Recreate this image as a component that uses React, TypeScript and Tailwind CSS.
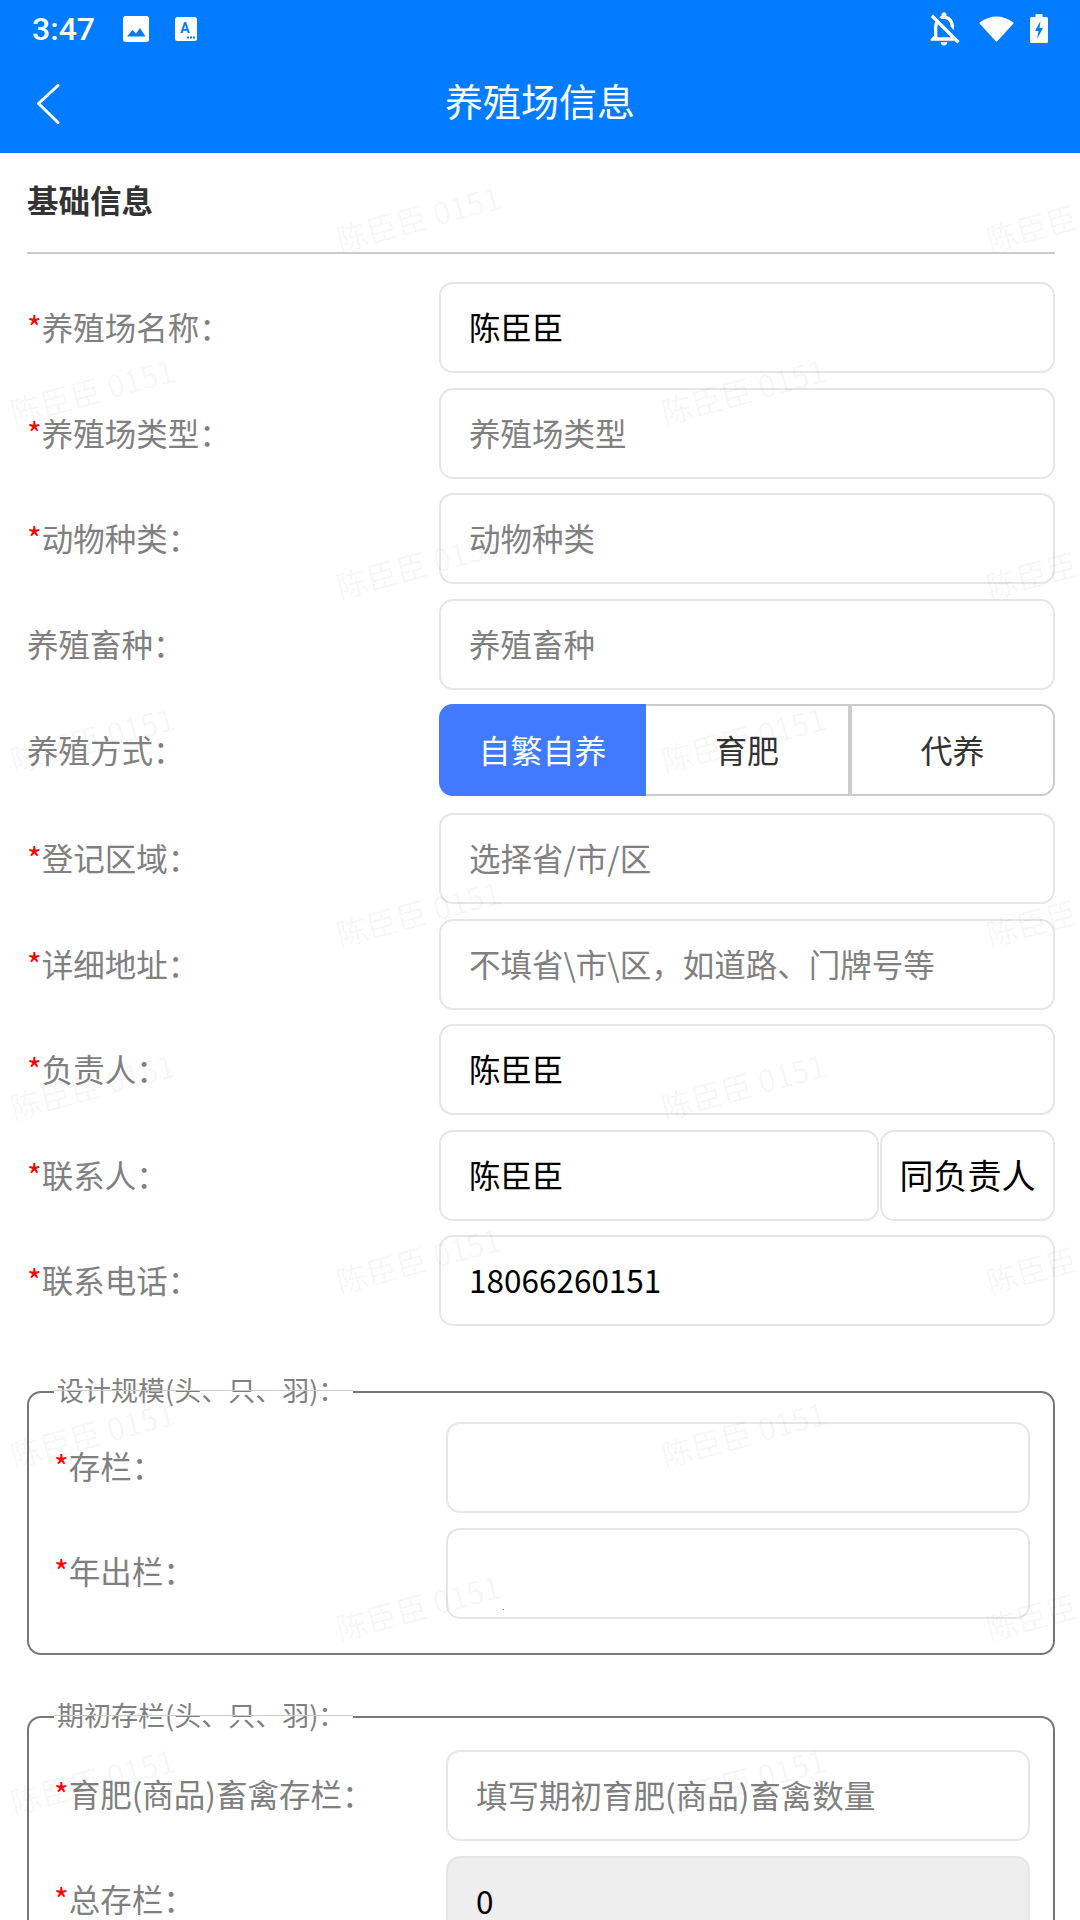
const FONT = "[font-family:'Noto_Sans_CJK_SC','Noto_Sans',sans-serif]";

// watermark centres, read off the screenshot
const MARKS: { x: number; y: number; top?: boolean }[] = [];
for (let i = 0; i < 11; i++) {
  const y = 43 + i * 173.7;
  if (i % 2 === 0) {
    MARKS.push({ x: 92, y, top: i === 0 }, { x: 743, y, top: i === 0 });
  } else {
    MARKS.push({ x: 418, y }, { x: 1068, y });
  }
}

function Label({ text, required }: { text: string; required?: boolean }) {
  return (
    <div className="-mt-[3px] text-[31.5px] leading-[44px] whitespace-nowrap text-[#808080]">
      {required && <span className="text-[#f00]">*</span>}
      {text}：
    </div>
  );
}

function TextBox({ value, placeholder, extra = '' }: { value?: string; placeholder?: string; extra?: string }) {
  return (
    <input
      readOnly
      value={value ?? ''}
      placeholder={placeholder}
      className={`block h-[91px] min-w-0 rounded-[14px] border-2 border-[#e6e6e6] pb-[3px] pl-[28px] text-[31.5px] text-black outline-none placeholder:text-[#808080] ${extra}`}
    />
  );
}

function Field({ label, required, value, placeholder }: { label: string; required?: boolean; value?: string; placeholder?: string }) {
  return (
    <div className="mb-[14.5px] flex items-center">
      <div className="w-[412px]">
        <Label text={label} required={required} />
      </div>
      <TextBox value={value} placeholder={placeholder} extra="flex-1" />
    </div>
  );
}

function GroupField({ label, value, placeholder, grey }: { label: string; value?: string; placeholder?: string; grey?: boolean }) {
  return (
    <div className="mb-[14.5px] flex items-center">
      <div className="w-[392px] pb-[3px]">
        <Label text={label} required />
      </div>
      <TextBox value={value} placeholder={placeholder} extra={grey ? 'flex-1 bg-[#eeeeee]' : 'flex-1'} />
    </div>
  );
}

function Group({ title, className, children }: { title: string; className: string; children: React.ReactNode }) {
  return (
    <fieldset className={`rounded-[14px] border-[2.5px] border-[#777777] pl-[25px] pr-[23px] pb-[20px] ${className}`}>
      <legend className="relative pb-[4px] pl-[3px] pr-[8px] text-[27px] leading-[36px] text-[#808080]">
        {title}
        <span className="absolute inset-x-0 top-1/2 -mt-[2px] h-px bg-[#cccccc]" />
      </legend>
      {children}
    </fieldset>
  );
}

function StatusBar() {
  return (
    <div className="flex h-[56px] items-center pl-[32px] pr-[32px] pt-[1px] text-white">
      <span className="[font-family:Roboto,sans-serif] text-[32px] font-medium leading-none">3:47</span>
      <svg width="26" height="26" viewBox="0 0 26 26" className="ml-[28px]">
        <rect width="26" height="26" rx="2.5" fill="#fff" />
        <path d="M4 20.5 L9.5 14 L13 17.5 L17 12 L22.5 20.5 Z" fill="#017bff" />
      </svg>
      <svg width="22" height="24" viewBox="0 0 22 24" className="ml-[26px]">
        <rect width="22" height="24" rx="2.5" fill="#fff" />
        <text x="10" y="15.5" textAnchor="middle" fontSize="14" fontWeight="700" fontFamily="Roboto" fill="#017bff">A</text>
        <rect x="12" y="19.5" width="2" height="2" fill="#017bff" />
        <rect x="15" y="19.5" width="2" height="2" fill="#017bff" />
        <rect x="18" y="19.5" width="2" height="2" fill="#017bff" />
      </svg>
      <div className="flex-1" />
      <svg width="40" height="40" viewBox="0 0 24 24" fill="#fff" className="mr-[15px]">
        <path d="M12 22c1.1 0 2-.9 2-2h-4c0 1.1.9 2 2 2zM12 6c2.48 0 4 1.97 4 4.5v.1l2 2V10.5c0-3.07-1.63-5.64-4.5-6.32V3.5c0-.83-.67-1.5-1.5-1.5s-1.5.67-1.5 1.5v.68c-.51.12-.99.32-1.42.58l1.46 1.46C10.99 6.09 11.47 6 12 6zM5.41 3.35 4 4.76l2.81 2.81C6.29 8.57 6 9.73 6 10.99V16l-2 2v1h14.24l1.74 1.74 1.41-1.41L5.41 3.35zM16 17H8v-6c0-.68.12-1.32.34-1.9L16 16.76V17z" />
      </svg>
      <svg width="35" height="27" viewBox="0 0 35 27" className="mr-[16px]">
        <path d="M17.5 25.5 L1.5 8 Q17.5 -3 33.5 8 Z" fill="#fff" stroke="#fff" strokeWidth="2" strokeLinejoin="round" />
      </svg>
      <svg width="18" height="29" viewBox="0 0 18 29">
        <path d="M5.5 0h7v3H16.5a1.5 1.5 0 0 1 1.5 1.5V27.5a1.5 1.5 0 0 1-1.5 1.5H1.5A1.5 1.5 0 0 1 0 27.5V4.5A1.5 1.5 0 0 1 1.5 3H5.5z" fill="#fff" />
        <path d="M10.5 7 L5 17 H8.5 L7 25 L13 14 H9.5 Z" fill="#017bff" />
      </svg>
    </div>
  );
}

export default function App() {
  return (
    <div className={`relative h-[1920px] w-[1080px] overflow-hidden bg-white ${FONT}`}>
      {/* header */}
      <div className="h-[153px] bg-[#017bff]">
        <StatusBar />
        <div className="relative flex h-[97px] items-center justify-center">
          <svg width="26" height="42" viewBox="0 0 26 42" className="absolute left-[35px] top-[27px]">
            <path d="M23 2.5 L3.5 20.5 L23 39.5" fill="none" stroke="#fff" strokeWidth="3" strokeLinecap="round" strokeLinejoin="round" />
          </svg>
          <span className="-mt-[10px] text-[38px] leading-[50px] text-white">养殖场信息</span>
        </div>
      </div>

      <div className="pl-[27px] pr-[25px]">
        <div className="flex h-[101px] items-center border-b-2 border-[#cccccc] pb-[5px] text-[31.5px] font-bold text-[#333333]">
          基础信息
        </div>

        <div className="pt-[28px]">
          <Field label="养殖场名称" required value="陈臣臣" />
          <Field label="养殖场类型" required placeholder="养殖场类型" />
          <Field label="动物种类" required placeholder="动物种类" />
          <Field label="养殖畜种" placeholder="养殖畜种" />

          {/* feeding mode */}
          <div className="mb-[17px] flex items-center">
            <div className="w-[412px]">
              <Label text="养殖方式" />
            </div>
            <div className="flex h-[92px] flex-1 text-[32px] text-[#333333]">
              <div className="flex w-[207px] items-center justify-center rounded-l-[14px] bg-[#4179ff] pb-[3px] text-white">自繁自养</div>
              <div className="flex w-[204px] items-center justify-center border-2 border-l-0 border-[#cccccc] pb-[3px]">育肥</div>
              <div className="flex flex-1 items-center justify-center rounded-r-[14px] border-2 border-[#cccccc] pb-[3px]">代养</div>
            </div>
          </div>

          <Field label="登记区域" required placeholder="选择省/市/区" />
          <Field label="详细地址" required placeholder="不填省\市\区，如道路、门牌号等" />
          <Field label="负责人" required value="陈臣臣" />

          <div className="mb-[14.5px] flex items-center">
            <div className="w-[412px]">
              <Label text="联系人" required />
            </div>
            <TextBox value="陈臣臣" extra="flex-1" />
            <button className="ml-[1px] h-[91px] w-[175px] rounded-[14px] border-2 border-[#e6e6e6] pb-[2px] text-[34px] text-black">同负责人</button>
          </div>

          <Field label="联系电话" required value="18066260151" />
        </div>

        <Group title="设计规模(头、只、羽)：" className="mt-[46px] pt-[10px]">
          <GroupField label="存栏" />
          <GroupField label="年出栏" />
        </Group>

        <Group title="期初存栏(头、只、羽)：" className="mt-[42px] pt-[13px]">
          <GroupField label="育肥(商品)畜禽存栏" placeholder="填写期初育肥(商品)畜禽数量" />
          <GroupField label="总存栏" value="0" grey />
        </Group>
      </div>

      {/* watermark */}
      <div className="pointer-events-none absolute inset-0">
        {MARKS.map((m, i) => (
          <span
            key={i}
            className={`absolute -translate-x-1/2 -translate-y-1/2 -rotate-[15deg] whitespace-nowrap text-[31px] leading-none ${m.top ? 'text-black/[0.02]' : 'text-black/[0.045]'}`}
            style={{ left: m.x, top: m.y }}
          >
            陈臣臣 0151
          </span>
        ))}
        <span className="absolute left-[503px] top-[1609px] h-px w-px bg-[#2a8a8a]" />
      </div>
    </div>
  );
}
